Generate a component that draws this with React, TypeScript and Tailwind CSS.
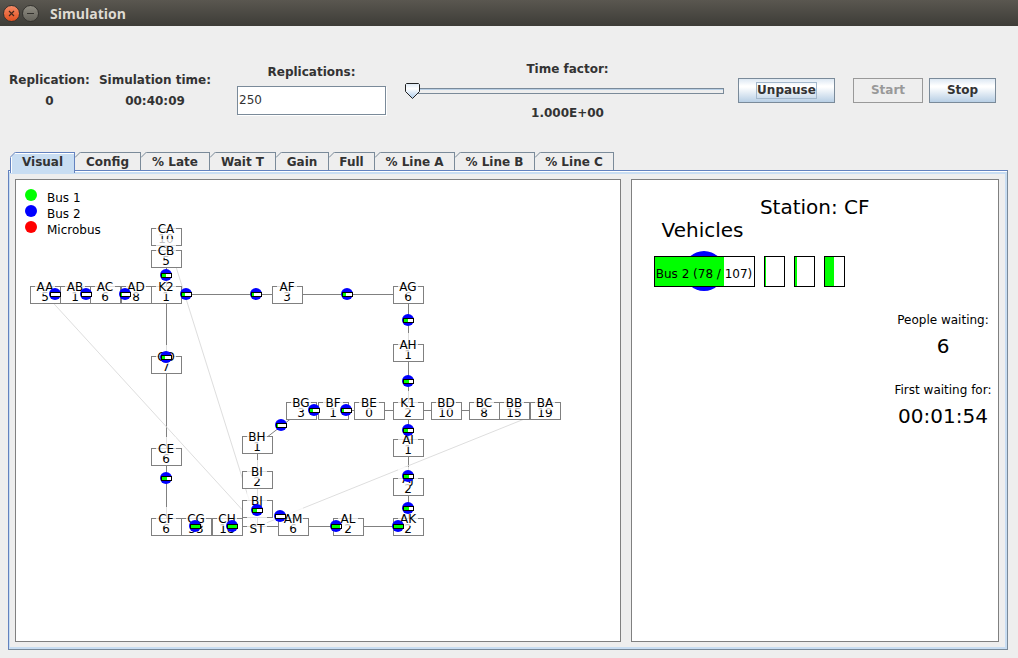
import { useState } from "react";

type Station = { id: string; x: number; y: number; waiting?: number };
type Bus = { x: number; y: number; load: number };

const stations: Station[] = [
  { id: "CA", x: 150, y: 56, waiting: 10 },
  { id: "CB", x: 150, y: 78, waiting: 5 },
  { id: "AA", x: 29, y: 114, waiting: 5 },
  { id: "AB", x: 59, y: 114, waiting: 1 },
  { id: "AC", x: 89, y: 114, waiting: 6 },
  { id: "AD", x: 120, y: 114, waiting: 8 },
  { id: "K2", x: 150, y: 114, waiting: 1 },
  { id: "AF", x: 271, y: 114, waiting: 3 },
  { id: "AG", x: 392, y: 114, waiting: 6 },
  { id: "AH", x: 392, y: 172, waiting: 1 },
  { id: "K1", x: 392, y: 230, waiting: 2 },
  { id: "AI", x: 392, y: 267, waiting: 1 },
  { id: "AJ", x: 392, y: 306, waiting: 2 },
  { id: "AK", x: 392, y: 346, waiting: 2 },
  { id: "AL", x: 332, y: 346, waiting: 2 },
  { id: "AM", x: 277, y: 346, waiting: 6 },
  { id: "CD", x: 150, y: 184, waiting: 7 },
  { id: "CE", x: 150, y: 276, waiting: 6 },
  { id: "CF", x: 150, y: 346, waiting: 6 },
  { id: "CG", x: 180, y: 346, waiting: 33 },
  { id: "CH", x: 211, y: 346, waiting: 18 },
  { id: "BA", x: 529, y: 230, waiting: 19 },
  { id: "BB", x: 498, y: 230, waiting: 15 },
  { id: "BC", x: 468, y: 230, waiting: 8 },
  { id: "BD", x: 430, y: 230, waiting: 10 },
  { id: "BE", x: 353, y: 230, waiting: 0 },
  { id: "BF", x: 317, y: 230, waiting: 1 },
  { id: "BG", x: 285, y: 230, waiting: 3 },
  { id: "BH", x: 241, y: 264, waiting: 1 },
  { id: "BI", x: 241, y: 299, waiting: 2 },
  { id: "BJ", x: 241, y: 328, waiting: 4 },
  { id: "ST", x: 241, y: 346 },
];

const lines: string[][] = [
  ["AA", "AB", "AC", "AD", "K2", "AF", "AG", "AH", "K1", "AI", "AJ", "AK", "AL", "AM", "ST"],
  ["BA", "BB", "BC", "BD", "K1", "BE", "BF", "BG", "BH", "BI", "BJ", "ST"],
  ["CA", "CB", "K2", "CD", "CE", "CF", "CG", "CH", "ST"],
];

const buses: Bus[] = [
  { x: 39, y: 114, load: 0 },
  { x: 70, y: 114, load: 0 },
  { x: 109, y: 114, load: 1 },
  { x: 170, y: 114, load: 3 },
  { x: 150, y: 95, load: 4 },
  { x: 150, y: 177, load: 3 },
  { x: 240, y: 114, load: 2 },
  { x: 331, y: 114, load: 3 },
  { x: 392, y: 140, load: 4 },
  { x: 392, y: 201, load: 5 },
  { x: 298, y: 230, load: 3 },
  { x: 330, y: 230, load: 2 },
  { x: 265, y: 245, load: 1 },
  { x: 392, y: 250, load: 4 },
  { x: 392, y: 296, load: 5 },
  { x: 392, y: 328, load: 5 },
  { x: 382, y: 346, load: 9 },
  { x: 320, y: 346, load: 8 },
  { x: 264, y: 336, load: 0 },
  { x: 241, y: 330, load: 4 },
  { x: 150, y: 298, load: 5 },
  { x: 179, y: 346, load: 9 },
  { x: 216, y: 346, load: 9 },
];

const byId = new Map(stations.map((s) => [s.id, s]));

function Edge({ from, to, color }: { from: string; to: string; color: string }) {
  const a = byId.get(from)!;
  const b = byId.get(to)!;
  return <line x1={a.x + 0.5} y1={a.y + 0.5} x2={b.x + 0.5} y2={b.y + 0.5} stroke={color} />;
}

function StationMark({ s }: { s: Station }) {
  const hub = s.waiting === undefined;
  const labelY = hub ? s.y + 7 : s.y - 3;
  return (
    <g>
      {!hub && (
        <>
          <rect x={s.x - 14.5} y={s.y - 7.5} width={30} height={17} fill="none" stroke="#808080" />
          <text x={s.x} y={s.y + 7}>{s.waiting}</text>
        </>
      )}
      <rect x={s.x - 10} y={labelY - 16} width={20} height={19} fill="#fff" fillOpacity={0.75} />
      <text x={s.x} y={labelY}>{s.id}</text>
    </g>
  );
}

function BusMark({ x, y, load }: Bus) {
  return (
    <g>
      <circle cx={x} cy={y} r={6} fill="#0000ff" />
      <rect x={x - 4.5} y={y - 1.5} width={10} height={4} fill="#fff" stroke="#000" />
      <rect x={x - 4} y={y - 1} width={load} height={3} fill="#00ff00" />
    </g>
  );
}

function Network() {
  return (
    <svg className="min-h-[400px] flex-1 text-[12px]" textAnchor="middle" role="img" aria-label="Line network">
      {lines.map((l) => l.slice(1).map((id, i) => <Edge key={l[i] + id} from={l[i]} to={id} color="#808080" />))}
      {["AA", "CA", "BA"].map((id) => <Edge key={id} from={id} to="ST" color="#dedede" />)}
      {stations.filter((s) => s.waiting !== undefined).map((s) => (
        <rect key={s.id} x={s.x - 14.5} y={s.y - 7.5} width={30} height={17} fill="#fff" />
      ))}
      {stations.map((s) => <StationMark key={s.id} s={s} />)}
      {buses.map((b, i) => <BusMark key={i} {...b} />)}
    </svg>
  );
}

function Legend() {
  return (
    <ul className="absolute top-[9px] left-[9px] text-[12px] leading-[18px] text-black">
      <li className="flex h-4 gap-2.5"><span className="size-3 rounded-full bg-[#00ff00]" />Bus 1</li>
      <li className="flex h-4 gap-2.5"><span className="size-3 rounded-full bg-[#0000ff]" />Bus 2</li>
      <li className="flex h-4 gap-2.5"><span className="size-3 rounded-full bg-[#ff0000]" />Microbus</li>
    </ul>
  );
}

function StationDetail() {
  return (
    <section className="flex flex-[368] flex-col border border-[#808080] bg-white pt-4 text-black">
      <h2 className="text-center text-[20px] leading-[23px]">Station: CF</h2>
      <h3 className="pl-[30px] text-[20px] leading-[23px]">Vehicles</h3>
      <div className="mt-[14px] flex gap-[9px] pl-[22px]">
        <div className="relative h-[31px] w-[101px]">
          <span className="absolute -top-[5px] left-[30px] size-10 rounded-full bg-[#0000ff]" />
          <div className="relative h-full border border-black bg-white">
            <div className="h-full w-[69px] bg-[#00ff00]" />
            <span className="absolute inset-0 flex items-center justify-center pt-1 text-[12px] leading-4 whitespace-nowrap">
              Bus 2 (78 / 107)
            </span>
          </div>
        </div>
        <div className="w-[21px] border border-black"><div className="h-full w-px bg-[#00ff00]" /></div>
        <div className="w-[21px] border border-black"><div className="h-full w-[2px] bg-[#00ff00]" /></div>
        <div className="w-[21px] border border-black"><div className="h-full w-[9px] bg-[#00ff00]" /></div>
      </div>
      <dl className="mt-[25px] mr-[3px] w-[104px] self-end text-center">
        <dt className="text-[12px] leading-4">People waiting:</dt>
        <dd className="mt-[7px] text-[20px] leading-[23px]">6</dd>
        <dt className="mt-6 text-[12px] leading-4">First waiting for:</dt>
        <dd className="mt-[7px] text-[20px] leading-[23px]">00:01:54</dd>
      </dl>
    </section>
  );
}

const tabs = [
  { name: "Visual", width: "w-[65px]" },
  { name: "Config", width: "w-[66px]" },
  { name: "% Late", width: "w-[69px]" },
  { name: "Wait T", width: "w-[66px]" },
  { name: "Gain", width: "w-[53px]" },
  { name: "Full", width: "w-[46px]" },
  { name: "% Line A", width: "w-[80px]" },
  { name: "% Line B", width: "w-[80px]" },
  { name: "% Line C", width: "w-[79px]" },
];

function Tab({ name, width, selected, onSelect }: { name: string; width: string; selected: boolean; onSelect: () => void }) {
  const tone = selected
    ? "z-10 h-[21px] border-l border-[#6382bf] bg-[#c8ddf2] shadow-[inset_1px_1px_#fff]"
    : "h-[18px] border-[#7a8a99] bg-[#eeeeee]";
  return (
    <button
      type="button"
      role="tab"
      aria-selected={selected}
      onClick={onSelect}
      className={`relative flex shrink-0 justify-center border-t border-r pt-px leading-4 whitespace-nowrap ${width} ${tone}`}
    >
      <svg className={`absolute -top-px size-[6px] ${selected ? "-left-px" : "left-0"}`} aria-hidden="true">
        <path d="M0 0H6L0 6Z" fill="#eeeeee" />
        <path d="M0 5.5L5.5 0" stroke={selected ? "#6382bf" : "#7a8a99"} />
      </svg>
      {name}
    </button>
  );
}

function TimeFactor() {
  const [value, setValue] = useState(0);
  return (
    <div className="flex flex-1 flex-col items-center pt-0.5">
      <label htmlFor="factor" className="pl-1.5 leading-4">Time factor:</label>
      <div className="relative mt-1 flex h-5 w-full items-center pl-[7px]">
        <div className="h-[6px] w-full border border-[#7a8a99] bg-[#eeeeee] shadow-[inset_0_1px_#b8cfe5]" />
        <svg
          className="absolute top-[2px] h-[17px] w-[16px]"
          style={{ left: `calc(${value}% - ${(value * 16) / 100}px)` }}
          aria-hidden="true"
        >
          <defs>
            <linearGradient id="thumb" x1="0" y1="0" x2="0" y2="1">
              <stop offset="0" stopColor="#dce8f4" />
              <stop offset="0.35" stopColor="#ffffff" />
              <stop offset="1" stopColor="#a9c8e8" />
            </linearGradient>
          </defs>
          <path d="M1.5 0.5H13.5L14.5 1.5V8.5L7.5 15.5L0.5 8.5V1.5Z" fill="url(#thumb)" stroke="#222" />
        </svg>
        <input
          id="factor"
          type="range"
          min={0}
          max={100}
          value={value}
          onChange={(e) => setValue(Number(e.target.value))}
          className="absolute inset-0 w-full opacity-0"
        />
      </div>
      <output htmlFor="factor" className="mt-1 pl-1.5 leading-4">1.000E+00</output>
    </div>
  );
}

const pushButton =
  "h-[25px] border border-[#7a8a99] bg-[linear-gradient(#dde8f3,#ffffff_30%,#ffffff_35%,#b8cfe5)]";

export default function App() {
  const [tab, setTab] = useState("Visual");
  const [count, setCount] = useState("250");
  return (
    <div className="flex min-h-screen flex-col bg-[#eeeeee] font-['DejaVu_Sans',sans-serif] text-[12px] font-bold text-[#333333]">
      <header className="flex h-[26px] items-center bg-[linear-gradient(#5a5750,#3d3c37)] pl-[3px]">
        <button type="button" aria-label="Close" className="grid size-[17px] place-items-center rounded-full border border-[#35332f] bg-[linear-gradient(#f58a66,#e0501f)]">
          <svg className="size-[9px]" viewBox="0 0 9 9" aria-hidden="true">
            <path d="M2 2L7 7M7 2L2 7" stroke="#43281c" strokeWidth="1.2" />
          </svg>
        </button>
        <button type="button" aria-label="Minimize" className="ml-[2px] grid size-[17px] place-items-center rounded-full border border-[#35332f] bg-[linear-gradient(#908d83,#65635b)]">
          <svg className="size-[9px]" viewBox="0 0 9 9" aria-hidden="true">
            <path d="M1 4.5H8" stroke="#33312d" />
          </svg>
        </button>
        <h1 className="ml-[11px] font-['Open_Sans',sans-serif] text-[14px] text-[#dfdbd2]">Simulation</h1>
      </header>

      <form className="flex h-[126px] items-center pt-0.5 pr-[22px] pl-2" onSubmit={(e) => e.preventDefault()}>
        <dl className="w-[83px] text-center leading-4">
          <dt>Replication:</dt>
          <dd className="mt-[5px]">0</dd>
        </dl>
        <dl className="ml-[7px] w-[114px] text-center leading-4 whitespace-nowrap">
          <dt>Simulation time:</dt>
          <dd className="mt-[5px]">00:40:09</dd>
        </dl>
        <div className="mb-0.5 ml-[25px] flex w-[149px] flex-col items-center">
          <label htmlFor="replications" className="leading-4">Replications:</label>
          <input
            id="replications"
            value={count}
            onChange={(e) => setCount(e.target.value)}
            className="mt-1.5 h-[29px] w-full border border-[#7a8a99] bg-white px-px font-normal shadow-[1px_1px_#fff] outline-none"
          />
        </div>
        <div className="ml-[19px] flex flex-1"><TimeFactor /></div>
        <button type="button" className={`ml-[14px] w-[97px] ${pushButton}`}>
          <span className="inline-block border border-[#a3b8cc] leading-[15px]">Unpause</span>
        </button>
        <button type="button" disabled className="ml-[18px] h-[25px] w-[70px] border border-[#999999] text-[#999999]">Start</button>
        <button type="button" className={`ml-[6px] w-[67px] ${pushButton}`}>Stop</button>
      </form>

      <main className="mr-[10px] mb-2 ml-2 flex flex-1 flex-col">
        <div role="tablist" className="flex h-[18px] items-start pl-[2px]">
          {tabs.map((t) => (
            <Tab key={t.name} {...t} selected={t.name === tab} onSelect={() => setTab(t.name)} />
          ))}
        </div>
        <div className="flex flex-1 border border-t-[#6382bf] border-r-[#7a8a99] border-b-[#7a8a99] border-l-[#6382bf] bg-white pt-px">
          <div className="flex flex-1 gap-[10px] border-t-2 border-r-2 border-b-2 border-l border-[#c8ddf2] bg-[#eeeeee] pt-[5px] pr-[6px] pb-[5px] pl-[5px] font-normal">
            <section className="relative flex flex-[606] border border-[#808080] bg-white text-black">
              <Network />
              <Legend />
            </section>
            <StationDetail />
          </div>
        </div>
      </main>
    </div>
  );
}
